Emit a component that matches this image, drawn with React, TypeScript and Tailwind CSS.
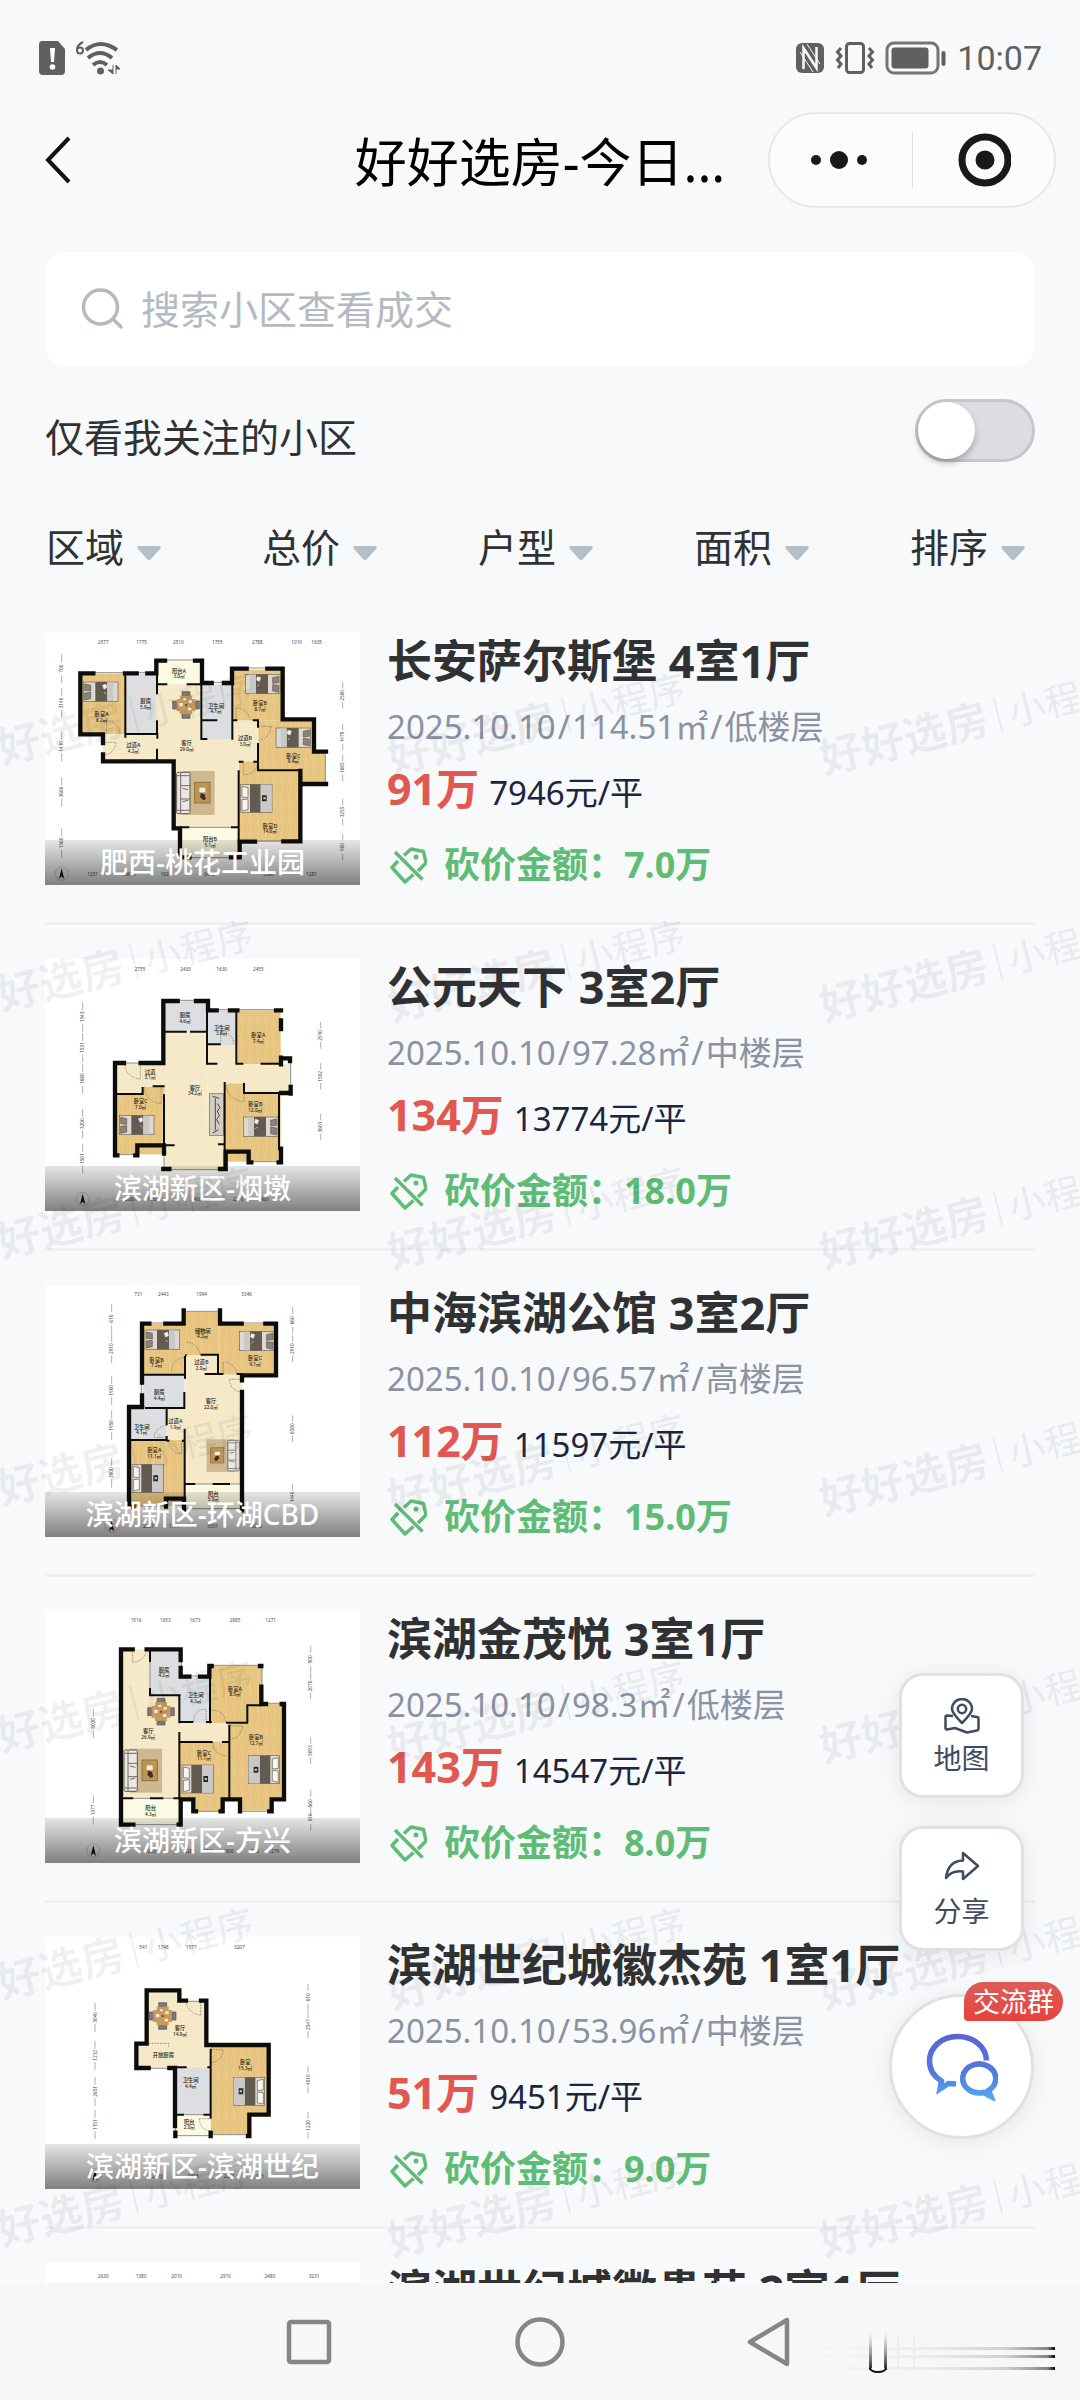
import React from "react";

type Fill = "wood" | "tile" | "grey" | "cream";
type Plan = {
  top: number;
  rooms: [number, number, number, number, Fill][];
  thick: string;
  thin: string;
  windows: string;
  doors: string;
  beds: [number, number, number][];
  sofas: [number, number, number][];
  tables: [number, number][];
  labels: [number, number, string, string][];
  dimsTop: [number, string][];
  dimsLeft: [number, string][];
  dimsRight: [number, string][];
  dimsBottom: [number, string][];
  box: [number, number, number, number];
};

const FILLS: Record<Fill, string> = {
  wood: "url(#wood)",
  tile: "url(#tile)",
  grey: "url(#grey)",
  cream: "#fbfae2",
};

const plans: Plan[] = [
  {
    top: 38,
    rooms: [
      [150, 160, 136, 182, "wood"],
      [286, 160, 95, 182, "grey"],
      [380, 122, 137, 70, "cream"],
      [380, 192, 134, 232, "tile"],
      [218, 342, 165, 80, "tile"],
      [435, 350, 190, 272, "tile"],
      [607, 300, 78, 125, "tile"],
      [514, 192, 93, 164, "grey"],
      [607, 148, 150, 152, "wood"],
      [685, 300, 165, 150, "wood"],
      [808, 395, 78, 95, "wood"],
      [627, 424, 183, 240, "wood"],
      [450, 622, 177, 90, "cream"],
    ],
    thick:
      "M190 159H151V342H219V368M219 402V423H431V624H450V711H478M603 711H629V664H675M760 663H811V452M285 159H320M352 159H379V121H405M495 121H516V188H545M582 188H606V145H650M712 145H758V297H852V394H888M812 491H888",
    thin: "M286 160V352M286 341H382V355M381 160V222M381 300V342M381 385V422M381 192H412M470 192H512M514 192V356H532M514 300H562M607 188V358M607 300H622M668 300H684V322M684 368V450H810M626 424H640M670 424H684M626 450V664M450 621H478M603 621H629",
    windows: "M190 157H285M320 157H352M405 119H495M545 186H582M650 143H712M886 402V490M675 662H760M478 712H603M478 621H603",
    doors: "M230 340V300Q265 305 270 340M218 366H258Q255 400 220 404M618 300V262Q655 265 660 300M684 318H724Q720 352 688 360M640 424V464Q678 460 684 428",
    beds: [[160, 185, 0], [646, 162, 180], [738, 323, 180], [632, 492, 1]],
    sofas: [[440, 452, 0]],
    tables: [[468, 254]],
    labels: [
      [215, 288, "卧室A", "8.2㎡"],
      [347, 248, "厨房", "5.9㎡"],
      [447, 157, "阳台A", "3.0㎡"],
      [558, 262, "卫生间", "4.1㎡"],
      [690, 255, "卧室B", "8.7㎡"],
      [310, 381, "过道A", "4.2㎡"],
      [470, 375, "客厅", "29.0㎡"],
      [645, 359, "过道B", "3.0㎡"],
      [790, 412, "卧室C", "9.4㎡"],
      [720, 622, "卧室D", "14.6㎡"],
      [540, 663, "阳台B", "5.1㎡"],
    ],
    dimsTop: [[220, "2577"], [335, "1775"], [445, "2510"], [562, "1755"], [682, "2788"], [800, "1010"], [860, "1635"]],
    dimsLeft: [[145, "700"], [248, "3140"], [378, "1410"], [515, "3660"], [668, "1360"]],
    dimsRight: [[225, "2580"], [350, "1478"], [442, "1685"], [575, "3255"], [680, "900"]],
    dimsBottom: [[188, "1251"], [300, "3610"], [408, "1628"], [538, "3410"], [715, "3390"], [845, "1281"]],
    box: [95, 67, 938, 762],
  },
  {
    top: 56,
    rooms: [
      [400, 182, 134, 92, "grey"],
      [534, 210, 86, 104, "grey"],
      [622, 210, 130, 162, "wood"],
      [404, 274, 128, 340, "tile"],
      [532, 314, 90, 250, "tile"],
      [580, 372, 200, 88, "tile"],
      [255, 368, 150, 94, "tile"],
      [255, 462, 148, 180, "wood"],
      [335, 440, 68, 30, "wood"],
      [586, 458, 166, 206, "wood"],
      [586, 430, 56, 30, "wood"],
      [402, 560, 182, 128, "tile"],
    ],
    thick:
      "M443 182H400V368H332M282 368H255V645H262M316 645H322V615H402V640M400 686H418M570 686H587V634H656V666H664M746 666H753V625M753 458H782M782 440V460M780 362V354H753M753 352V372M753 266V240M498 182H534V210H560M600 210H622M738 210H753",
    thin: "M404 274H470M480 274H532M531 182V370H562M534 312H572M619 212V370H640M692 370H753V348M255 461H338V440M368 438H404M402 462V615H434M564 612H584M584 425V686M642 428V458H753M747 458V630",
    windows: "M443 180H498M560 208H600M622 208H738M755 240V266M782 362V440M753 625V660M664 664H746M262 643H316M418 688H570M282 368H332M402 640V684",
    doors: "M331 368V416Q288 412 284 370M343 440Q346 484 394 490V440M572 312V272Q608 278 612 310M588 434Q592 478 642 484V434",
    beds: [[268, 525, 0], [640, 530, 180]],
    sofas: [[538, 460, 2]],
    tables: [],
    labels: [
      [465, 230, "厨房", "4.6㎡"],
      [575, 268, "卫生间", "3.8㎡"],
      [685, 290, "卧室A", "7.4㎡"],
      [360, 400, "过道", "3.1㎡"],
      [495, 448, "客厅", "34.2㎡"],
      [332, 488, "卧室C", "7.0㎡"],
      [676, 498, "卧室B", "12.0㎡"],
    ],
    dimsTop: [[330, "2755"], [467, "2430"], [575, "1630"], [685, "2455"]],
    dimsLeft: [[230, "1343"], [322, "1531"], [415, "1680"], [550, "3200"], [655, "1501"]],
    dimsRight: [[285, "2910"], [408, "1592"], [560, "3601"]],
    dimsBottom: [[300, "2680"], [368, "1150"], [498, "3400"], [625, "2210"], [700, "1960"]],
    box: [158, 87, 872, 778],
  },
  {
    top: 59,
    rooms: [
      [336, 176, 128, 152, "wood"],
      [462, 140, 106, 130, "wood"],
      [568, 176, 170, 152, "wood"],
      [466, 270, 98, 60, "tile"],
      [466, 328, 170, 330, "tile"],
      [338, 328, 126, 98, "grey"],
      [410, 426, 60, 100, "tile"],
      [298, 426, 112, 98, "grey"],
      [298, 524, 166, 198, "wood"],
      [466, 656, 170, 80, "cream"],
    ],
    thick:
      "M358 175H336V352M336 390V425H297V724H310M408 724V700H462V735M636 735V380M636 345V330H738V175H706M635 175H570V135M461 135V175H406",
    thin: "M340 328H462M465 272V340M463 380V428H345M465 270H470M512 268H564V328M524 326H580M620 326H638M410 428V480M410 512V524H300M410 526H418M456 526H464M464 490V700M466 656H496M548 656H600M630 656H638",
    windows: "M358 173H406M461 138H570M635 173H706M334 352V390M310 722H408M466 730H636M496 656H548M600 656H630M300 424H345",
    doors: "M470 230Q505 235 510 268M424 318Q428 280 464 276M580 326V290Q615 292 620 326M636 342H598Q602 378 634 380M410 480Q376 485 372 516H410M416 526Q420 562 455 566V526",
    beds: [[345, 194, 0], [628, 198, 180], [306, 597, 1]],
    sofas: [[532, 522, 3]],
    tables: [],
    labels: [
      [380, 289, "卧室B", "7.2㎡"],
      [518, 202, "储物间", "4.2㎡"],
      [675, 284, "卧室C", "9.1㎡"],
      [514, 296, "过道B", "2.0㎡"],
      [388, 386, "厨房", "4.4㎡"],
      [543, 413, "客厅", "22.0㎡"],
      [436, 473, "过道A", "1.9㎡"],
      [335, 490, "卫生间", "4.1㎡"],
      [373, 560, "卧室A", "11.1㎡"],
      [550, 691, "阳台", "5.0㎡"],
    ],
    dimsTop: [[325, "731"], [400, "2443"], [515, "1994"], [650, "3346"]],
    dimsLeft: [[160, "610"], [250, "2910"], [375, "1900"], [480, "1950"], [622, "3800"]],
    dimsRight: [[165, "660"], [250, "2910"], [490, "6580"], [695, "1440"]],
    dimsBottom: [[355, "2537"], [432, "1117"], [548, "3331"], [680, "2610"]],
    box: [245, 87, 788, 784],
  },
  {
    top: 63,
    rooms: [
      [272, 178, 88, 448, "tile"],
      [358, 318, 92, 306, "tile"],
      [360, 180, 92, 136, "grey"],
      [450, 262, 90, 138, "grey"],
      [540, 228, 156, 172, "wood"],
      [654, 342, 108, 290, "wood"],
      [598, 400, 60, 232, "wood"],
      [448, 400, 150, 58, "tile"],
      [450, 456, 148, 172, "wood"],
      [496, 625, 80, 40, "wood"],
      [628, 620, 92, 42, "wood"],
      [276, 628, 174, 76, "cream"],
    ],
    thick:
      "M308 178H273V704H310M446 704H452V628H490V664H498M572 664H578V628H630V664H630M718 664H725V628H762V342H755M708 342H694V290M694 228H690M545 228H538V260H510M478 260H452V234M452 210V178H350",
    thin: "M360 182V216M360 294V316H452M448 316V400M448 396H490M528 396H545M540 240V400M588 398H598M652 400V346H694M448 426V456M450 456H548M576 456H598V404M598 450V628M448 456V628M274 625H310M360 625H400M430 625H452M598 398H654",
    windows: "M545 226H690M696 232V290M708 340H755M478 258H510M454 210V234M498 664H572M632 664H718M310 704H446M310 625H360M400 625H430M360 216V294",
    doors: "M308 178V218Q345 212 350 180M490 396Q494 356 528 358V396M545 360Q585 362 588 398M600 408H638Q632 446 600 448M548 456Q550 495 590 497",
    beds: [[456, 525, 1], [655, 497, 181]],
    sofas: [[282, 476, 0]],
    tables: [[393, 365]],
    labels: [
      [402, 245, "厨房", "4.2㎡"],
      [497, 322, "卫生间", "4.3㎡"],
      [615, 302, "卧室A", "8.5㎡"],
      [355, 429, "客厅", "26.9㎡"],
      [678, 447, "卧室B", "12.7㎡"],
      [522, 494, "卧室C", "11.1㎡"],
      [362, 660, "阳台", "4.3㎡"],
    ],
    dimsTop: [[318, "1516"], [406, "1653"], [495, "1673"], [615, "2985"], [722, "1271"]],
    dimsLeft: [[400, "8020"], [660, "1377"]],
    dimsRight: [[208, "900"], [288, "2070"], [482, "5093"], [640, "560"], [682, "810"]],
    dimsBottom: [[362, "3290"], [475, "828"], [535, "1500"], [595, "1900"], [675, "590"], [732, "1276"]],
    box: [190, 90, 842, 784],
  },
  {
    top: 67,
    rooms: [
      [350, 228, 100, 170, "tile"],
      [440, 258, 90, 200, "tile"],
      [320, 390, 222, 70, "tile"],
      [440, 458, 100, 142, "grey"],
      [542, 395, 170, 208, "wood"],
      [542, 590, 114, 70, "wood"],
      [438, 600, 103, 60, "cream"],
    ],
    thick:
      "M356 460H319V387H350V227H448V258H468M513 258H529V391H716V600H658V664H654M542 655V664M436 664V654M435 634V460H418",
    thin: "M350 460H357M414 458H470M532 458H542V402M542 446V612M542 648V664M440 600H462M520 600H542",
    windows: "M357 461H414M440 663H540M545 660H654M462 600H520M468 260H513M436 634V654",
    doors: "M512 262V302Q475 296 468 262M542 405H580Q575 440 545 444M508 612H542M508 612Q510 645 540 648M358 386H416V396",
    beds: [[610, 488, 181]],
    sofas: [],
    tables: [[398, 304]],
    labels: [
      [450, 346, "客厅", "14.9㎡"],
      [400, 428, "开放厨房", ""],
      [482, 502, "卫生间", "4.4㎡"],
      [646, 448, "卧室", "15.3㎡"],
      [478, 627, "阳台", "2.0㎡"],
    ],
    dimsTop: [[340, "541"], [400, "1748"], [484, "1577"], [628, "3207"]],
    dimsLeft: [[308, "3040"], [422, "1212"], [530, "2651"], [630, "1151"]],
    dimsRight: [[248, "610"], [330, "2547"], [495, "4010"], [632, "1220"]],
    dimsBottom: [[382, "2573"], [490, "1815"], [598, "2301"], [685, "1115"]],
    box: [195, 98, 834, 784],
  },
  {
    top: 60,
    rooms: [],
    thick: "",
    thin: "",
    windows: "",
    doors: "",
    beds: [],
    sofas: [],
    tables: [],
    labels: [],
    dimsTop: [[220, "2630"], [333, "1380"], [440, "2010"], [587, "2910"], [720, "2480"], [852, "3231"]],
    dimsLeft: [],
    dimsRight: [],
    dimsBottom: [],
    box: [130, 100, 938, 780],
  },
];

/** Bed drawn 105 units wide; kinds 1 and 181 are the larger double beds. */
function Bed({ x, y, kind }: { x: number; y: number; kind: number }) {
  const big = kind % 2 === 1;
  const w = big ? 94 : 104;
  const h = big ? 84 : 58;
  const flip = kind >= 180;
  return (
    <g transform={flip ? `translate(${x + w} ${y}) scale(-1 1)` : `translate(${x} ${y})`}>
      <rect width={w} height={h} fill="#dcd8d2" stroke="#6d6257" strokeWidth="2" />
      <path d={`M4 6L22 10V${h / 2 - 2}L4 ${h / 2 - 4}ZM4 ${h / 2 + 4}L22 ${h / 2 + 2}V${h - 8}L4 ${h - 4}Z`} fill={big ? "#f7f6f2" : "#8d8378"} stroke="#5c554c" strokeWidth="2" />
      <rect x={big ? 28 : 36} width={big ? 32 : 36} height={h} fill="#635a50" />
      <rect x={big ? 60 : 72} y="1" width={big ? 33 : 18} height={h - 2} fill="#cbc9c8" />
      {big ? (
        <path d={`M64 ${h / 2 - 9}h14v18h-14zM68 ${h / 2 - 3}h7v6h-7z`} fill="#2a2725" fillRule="evenodd" />
      ) : (
        <path d="M58 10l10-3 2 10-8 4zM62 30l6 6" fill="#f1efec" stroke="#f1efec" strokeWidth="2" />
      )}
    </g>
  );
}

function Sofa({ x, y, kind }: { x: number; y: number; kind: number }) {
  if (kind === 2) {
    return (
      <g transform={`translate(${x} ${y})`}>
        <rect width="42" height="125" fill="#d3cdc3" stroke="#6d675e" strokeWidth="2" />
        <path d="M10 8L30 14M10 118L28 108M18 14V110M24 30l8 12-8 10 6 14-8 12 8 14" fill="none" stroke="#4d4944" strokeWidth="3" />
      </g>
    );
  }
  const s = kind === 3 ? `translate(${x + 96} ${y}) scale(-.86 .74)` : `translate(${x} ${y})`;
  return (
    <g transform={s}>
      <rect x="18" width="96" height="132" fill="#cdb892" />
      <rect x="0" y="4" width="40" height="124" rx="4" fill="#ece7e2" stroke="#5e5750" strokeWidth="3" />
      <path d="M12 6V126M12 44H40M12 84H40M2 14H38M2 118H38M18 52l16 4M18 92l16-4" fill="none" stroke="#716960" strokeWidth="3" />
      <rect x="54" y="34" width="46" height="62" fill="#bd9454" stroke="#92703b" strokeWidth="3" />
      <path d="M68 50h18v14H68z" fill="#f1eee8" />
      <path d="M72 66l12 4 4 14-8 4-10-10z" fill="#373028" />
    </g>
  );
}

function DiningTable({ x, y }: { x: number; y: number }) {
  return (
    <g transform={`translate(${x} ${y})`}>
      <path d="M-12 -40h24v12h-24zM-12 28h24v12h-24zM-40 -12h12v24h-12zM28 -12h12v24h-12z" fill="#7d7a77" stroke="#55524f" strokeWidth="2" />
      <path d="M-18 -28H18V-18H28V18H18V28H-18V18H-28V-18H-18Z" fill="#c79a5c" />
      <path d="M-20 -6h10v10h-10zM8 -14h10v8H8zM6 8h10v8H6zM-8 -20h8v6h-8z" fill="#f2ede4" />
      <circle r="3" fill="#5c3a1f" />
    </g>
  );
}

function FloorPlan({ plan }: { plan: Plan }) {
  const [left, top, right, bottom] = plan.box;
  return (
    <svg className="block h-full w-full bg-white" viewBox={`45 ${plan.top} 945 756`} aria-hidden="true">
      {plan.rooms.map(([x, y, w, h, fill], i) => (
        <rect key={i} x={x} y={y} width={w} height={h} fill={FILLS[fill]} />
      ))}
      <path d={plan.doors} fill="none" stroke="#77705f" strokeWidth="2" strokeDasharray="5 3" />
      {plan.tables.map(([x, y], i) => (
        <DiningTable key={i} x={x} y={y} />
      ))}
      {plan.sofas.map(([x, y, k], i) => (
        <Sofa key={i} x={x} y={y} kind={k} />
      ))}
      {plan.beds.map(([x, y, k], i) => (
        <Bed key={i} x={x} y={y} kind={k} />
      ))}
      <path d={plan.windows} fill="none" stroke="#8b8f90" strokeWidth="3" />
      <path d={plan.thin} fill="none" stroke="#0c0c0a" strokeWidth="6" />
      <path d={plan.thick} fill="none" stroke="#0c0c0a" strokeWidth="13" strokeLinecap="square" />
      <g fontSize="16" textAnchor="middle" fill="#1d1a14" fontWeight="500">
        {plan.labels.map(([x, y, name, area], i) => (
          <text key={i} x={x} y={y}>
            {name}
            <tspan x={x} dy="17" fontSize="14">{area}</tspan>
          </text>
        ))}
      </g>
      <g fontSize="14" textAnchor="middle" fill="#4a4a4a">
        {plan.dimsTop.map(([x, t], i) => (
          <text key={i} x={x} y={top + 5}>{t}</text>
        ))}
        {plan.dimsBottom.map(([x, t], i) => (
          <text key={i} x={x} y={bottom + 5}>{t}</text>
        ))}
        {plan.dimsLeft.map(([y, t], i) => (
          <g key={i}>
            <path d={`M${left} ${y - 44}V${y - 20}M${left} ${y + 20}V${y + 44}`} stroke="#8a8a8a" strokeWidth="2" />
            <text transform={`translate(${left + 5} ${y}) rotate(-90)`}>{t}</text>
          </g>
        ))}
        {plan.dimsRight.map(([y, t], i) => (
          <g key={i}>
            <path d={`M${right} ${y - 40}V${y - 20}M${right} ${y + 20}V${y + 40}`} stroke="#8a8a8a" strokeWidth="2" />
            <text transform={`translate(${right + 5} ${y}) rotate(-90)`}>{t}</text>
          </g>
        ))}
      </g>
      <circle cx={left} cy={bottom - 2} r="20" fill="none" stroke="#8a8a8a" strokeWidth="1" />
      <path d={`M${left} ${bottom - 18}l8 32-8-8-8 8z`} fill="#111" />
    </svg>
  );
}

const listings = [
  { name: "长安萨尔斯堡", rooms: "4室1厅", area: "114.51", floor: "低楼层", price: "91", unit: "7946", cut: "7.0", region: "肥西-桃花工业园" },
  { name: "公元天下", rooms: "3室2厅", area: "97.28", floor: "中楼层", price: "134", unit: "13774", cut: "18.0", region: "滨湖新区-烟墩" },
  { name: "中海滨湖公馆", rooms: "3室2厅", area: "96.57", floor: "高楼层", price: "112", unit: "11597", cut: "15.0", region: "滨湖新区-环湖CBD" },
  { name: "滨湖金茂悦", rooms: "3室1厅", area: "98.3", floor: "低楼层", price: "143", unit: "14547", cut: "8.0", region: "滨湖新区-方兴" },
  { name: "滨湖世纪城徽杰苑", rooms: "1室1厅", area: "53.96", floor: "中楼层", price: "51", unit: "9451", cut: "9.0", region: "滨湖新区-滨湖世纪" },
  { name: "滨湖世纪城徽贵苑", rooms: "2室1厅", area: "88.6", floor: "中楼层", price: "96", unit: "10835", cut: "6.0", region: "滨湖新区-滨湖世纪" },
];

function TagIcon() {
  return (
    <svg className="h-10 w-10 shrink-0" viewBox="0 0 40 40" fill="none" stroke="#5fbc75" strokeWidth="3.500" strokeLinejoin="round" aria-hidden="true">
      <path d="M17 10.500L24 4L36.500 6.500L39 18L31 26" />
      <path d="M11 16L5 22.500L18 37L26.500 29.500" />
      <path d="M8 7L35.500 34.500" />
      <circle cx="29" cy="12" r="2.500" fill="#5fbc75" stroke="none" />
    </svg>
  );
}

function StatusBar() {
  return (
    <div className="flex h-28 items-center justify-between pt-1 pr-[38px] pl-[38px] text-[#606060]">
      <div className="flex items-center gap-2">
        <svg className="h-9 w-7" viewBox="0 0 28 36" aria-hidden="true">
          <path d="M4 1H20L27 9V31Q27 35 23 35H5Q1 35 1 31V5Q1 1 4 1Z" fill="#606060" />
          <path d="M12 8h5l-1 14h-3z" fill="#fff" />
          <circle cx="14.500" cy="27" r="2.800" fill="#fff" />
        </svg>
        <svg className="h-9 w-12" viewBox="0 0 48 36" fill="none" stroke="#606060" aria-hidden="true">
          <path d="M9 2Q3 5 3 10" strokeWidth="2" />
          <circle cx="6" cy="10.500" r="3" strokeWidth="2" />
          <path d="M12 10Q26 -2 43 10" strokeWidth="4" />
          <path d="M14 18Q26 8 38 18" strokeWidth="4" />
          <path d="M19 25Q26 19 33 25" strokeWidth="4" />
          <circle cx="26.500" cy="31" r="3.500" fill="#606060" stroke="none" />
          <path d="M39 25v9l-5-4h5M42 34v-9l4 4h-4" fill="#606060" strokeWidth="1" />
        </svg>
      </div>
      <div className="flex items-center gap-[10px]">
        <svg className="h-8 w-[30px]" viewBox="0 0 30 32" aria-hidden="true">
          <rect x="1" y="1" width="28" height="30" rx="6" fill="#606060" />
          <path d="M8.500 27V6L21.500 26V5" fill="none" stroke="#f7f9fb" strokeWidth="2.500" />
          <path d="M12 2L25 22M5 10L18 30" stroke="#f7f9fb" strokeWidth="1" />
        </svg>
        <svg className="h-9 w-10" viewBox="0 0 40 36" fill="none" stroke="#606060" strokeWidth="3" aria-hidden="true">
          <rect x="11.500" y="3.500" width="17" height="29" rx="3" />
          <path d="M6 8L2.500 12L6 16L2.500 20L6 24L3 28" />
          <path d="M34 8L37.500 12L34 16L37.500 20L34 24L37 28" />
        </svg>
        <svg className="h-9 w-[62px]" viewBox="0 0 62 36" aria-hidden="true">
          <rect x="2" y="3" width="51" height="30" rx="7" fill="none" stroke="#757575" strokeWidth="3" />
          <rect x="6.500" y="7.500" width="37" height="21" rx="3" fill="#606060" />
          <rect x="56.500" y="11" width="4" height="15" rx="2" fill="#606060" />
        </svg>
        <span className="font-['Roboto',sans-serif] text-[34px] leading-10">10:07</span>
      </div>
    </div>
  );
}

function Header() {
  return (
    <header className="relative flex h-24 items-center justify-between pr-6 pl-[42px]">
      <button type="button" aria-label="返回" className="flex h-12 w-8 items-center">
        <svg className="h-12 w-8" viewBox="0 0 32 48" fill="none" stroke="#111" strokeWidth="4" aria-hidden="true">
          <path d="M27 2L6 24L27 46" />
        </svg>
      </button>
      <h1 className="absolute left-1/2 -translate-x-1/2 pt-1 text-[52px] leading-[60px] whitespace-nowrap text-black">好好选房-今日...</h1>
      <div className="relative flex h-24 w-72 items-center rounded-full border-2 border-[#e7e8ea] bg-[#fcfcfd]">
        <button type="button" aria-label="更多" className="flex flex-1 justify-center">
          <svg className="h-5 w-[60px]" viewBox="0 0 60 20" fill="#191919" aria-hidden="true">
            <circle cx="5" cy="10" r="5" />
            <circle cx="28" cy="10" r="9" />
            <circle cx="51" cy="10" r="5" />
          </svg>
        </button>
        <span className="h-14 w-px bg-[#dfe0e2]" />
        <button type="button" aria-label="关闭" className="flex flex-1 justify-center">
          <svg className="h-14 w-14" viewBox="0 0 56 56" aria-hidden="true">
            <circle cx="30" cy="28" r="23" fill="none" stroke="#191919" strokeWidth="7" />
            <circle cx="30" cy="28" r="9.500" fill="#191919" />
          </svg>
        </button>
      </div>
    </header>
  );
}

function Filters() {
  return (
    <div className="mt-[57px] mb-6 grid h-14 shrink-0 grid-cols-5 justify-items-center">
      {["区域", "总价", "户型", "面积", "排序"].map((name) => (
        <div key={name} className="relative flex w-[124px] items-center">
          <select aria-label={name} className="w-full cursor-pointer appearance-none bg-transparent text-[39px] leading-14 text-[#303133] outline-none">
            <option>{name}</option>
          </select>
          <svg className="pointer-events-none absolute top-[26px] right-2 h-4 w-[26px]" viewBox="0 0 26 16" fill="#b3bec7" aria-hidden="true">
            <path d="M3 1H23Q26 1 24 4L15 14Q13 16 11 14L2 4Q0 1 3 1Z" />
          </svg>
        </div>
      ))}
    </div>
  );
}

function Listing({ item, plan }: { item: (typeof listings)[number]; plan: Plan }) {
  return (
    <li className="mx-[45px] flex items-start gap-[27px] border-b-[3px] border-[#eef0f2] pt-[34px] pb-[37px]">
      <figure className="relative h-[252px] w-[315px] shrink-0">
        <FloorPlan plan={plan} />
        <figcaption className="absolute inset-x-0 bottom-0 bg-linear-to-b from-black/10 to-black/50 text-center text-[28px] leading-[45px] font-medium text-white">
          {item.region}
        </figcaption>
      </figure>
      <div className="min-w-0 flex-1 whitespace-nowrap">
        <h2 className="h-14 text-[45px] leading-14 font-bold text-[#303133]">
          {item.name} {item.rooms}
        </h2>
        <p className="mt-4 flex h-11 items-center gap-0.5 text-[33px] leading-11 text-[#8a92a3]">
          <span>2025.10.10</span>
          <span>/</span>
          <span>{item.area}㎡</span>
          <span>/</span>
          <span>{item.floor}</span>
        </p>
        <p className="mt-3 flex h-14 items-baseline gap-2.5 leading-14">
          <strong className="text-[43px] font-bold text-[#e0584f]">{item.price}万</strong>
          <span className="text-[33px] text-[#1b2540]">{item.unit}元/平</span>
        </p>
        <p className="mt-7 flex h-10 items-center gap-[17px] text-[36px] leading-10 font-bold text-[#5fbc75]">
          <TagIcon />
          <span>砍价金额：{item.cut}万</span>
        </p>
      </div>
    </li>
  );
}

function Watermarks() {
  return (
    <div className="pointer-events-none absolute inset-0 overflow-hidden" aria-hidden="true">
      <div className="-ml-12 grid w-[200%] auto-rows-[247px] grid-cols-[repeat(auto-fill,432px)] text-slate-900/6">
        {Array.from({ length: 35 }, (_, i) => (
          <div key={i} className="flex items-center">
            <div className="flex -rotate-14 items-center gap-[10px] whitespace-nowrap">
              <span className="text-[43px] font-bold">好好选房</span>
              <span className="h-9 w-0.5 bg-slate-900/6" />
              <span className="text-[37px] font-medium">小程序</span>
            </div>
          </div>
        ))}
      </div>
    </div>
  );
}

function FloatingActions() {
  const box =
    "flex h-[125px] w-[125px] flex-col items-center gap-1 rounded-3xl border-[3px] border-[#e0e1e3] bg-white pt-[22px] text-[28px] leading-10 text-[#414a5e] shadow-[0_4px_24px_rgba(0,0,0,0.08)]";
  return (
    <div className="absolute right-[46px] bottom-[144px] flex flex-col items-center">
      <button type="button" className={box}>
        <svg className="h-9 w-9" viewBox="0 0 36 36" fill="none" stroke="#414a5e" strokeWidth="2.500" strokeLinejoin="round" aria-hidden="true">
          <path d="M18 25Q8 15 8 11A10 10 0 0 1 28 11Q28 15 18 25Z" />
          <circle cx="18" cy="11" r="4.200" />
          <path d="M9 18L3 17.500Q1.500 17.500 1.500 19V30Q1.500 31.500 3 31.500L11 30L23 34.500L33 32.500Q34.500 32 34.500 30.500V20.500Q34.500 19 33 19L27 18" />
        </svg>
        地图
      </button>
      <button type="button" className={`${box} mt-7`}>
        <svg className="h-9 w-9" viewBox="0 0 36 36" fill="none" stroke="#414a5e" strokeWidth="2.500" strokeLinejoin="round" aria-hidden="true">
          <path d="M19 2L34 15L19 28V20.500Q8 19 2 27Q4 10 19 9.500Z" />
        </svg>
        分享
      </button>
      <button type="button" className="relative mt-[43px] flex h-[145px] w-[145px] items-center justify-center rounded-full border-[3px] border-[#e0e1e3] bg-white shadow-[0_4px_24px_rgba(0,0,0,0.08)]">
        <svg className="h-[68px] w-[72px]" viewBox="0 0 72 68" fill="none" strokeWidth="5.500" aria-hidden="true">
          <defs>
            <linearGradient id="chat" gradientUnits="userSpaceOnUse" x1="0" y1="0" x2="0" y2="66">
              <stop offset="0" stopColor="#5a62d6" />
              <stop offset="0.600" stopColor="#5479dc" />
              <stop offset="1" stopColor="#4fa8f0" />
            </linearGradient>
          </defs>
          <path d="M60.500 27.500C60 13 47 3.500 31.500 3.500C15 3.500 3.500 15 3.500 28C3.500 36 8 43.500 15.500 48L14 56L22.500 50.500L30 51" stroke="url(#chat)" />
          <path d="M62.500 57.500A16.500 14.500 0 1 0 57.500 59.500L65 63.500Z" stroke="url(#chat)" />
        </svg>
        <span className="absolute -top-[15px] left-[72px] rounded-[20px] rounded-bl-sm bg-linear-to-b from-[#de5c58] to-[#e8403c] px-[9px] text-[27px] leading-[39px] whitespace-nowrap text-white">
          交流群
        </span>
      </button>
    </div>
  );
}

function SystemNav() {
  return (
    <nav className="relative flex h-[117px] shrink-0 items-center justify-center gap-[173px] bg-[#f7f7f7]">
      <button type="button" aria-label="最近任务">
        <svg className="h-[58px] w-[58px]" viewBox="0 0 58 58" fill="none" stroke="#868686" strokeWidth="4.500" aria-hidden="true">
          <rect x="9" y="9" width="40" height="40" rx="2" />
        </svg>
      </button>
      <button type="button" aria-label="主页">
        <svg className="h-[58px] w-[58px]" viewBox="0 0 58 58" fill="none" stroke="#868686" strokeWidth="4.500" aria-hidden="true">
          <circle cx="29" cy="29" r="22.500" />
        </svg>
      </button>
      <button type="button" aria-label="返回上一页">
        <svg className="h-[58px] w-[58px]" viewBox="0 0 58 58" fill="none" stroke="#868686" strokeWidth="4.500" strokeLinejoin="round" aria-hidden="true">
          <path d="M45 7V51L8 29Z" />
        </svg>
      </button>
      <svg className="absolute right-6 bottom-5 h-12 w-64" viewBox="0 0 256 48" aria-hidden="true">
        <defs>
          <linearGradient id="streak" x1="0" x2="1" y1="0" y2="0">
            <stop offset="0" stopColor="#999" stopOpacity="0" />
            <stop offset="0.500" stopColor="#999" stopOpacity="0.120" />
            <stop offset="0.800" stopColor="#888" stopOpacity="0.350" />
            <stop offset="0.970" stopColor="#666" stopOpacity="0.800" />
            <stop offset="1" stopColor="#000" />
          </linearGradient>
          <linearGradient id="post" x1="0" x2="0" y1="0" y2="1">
            <stop offset="0" stopColor="#888" stopOpacity="0" />
            <stop offset="1" stopColor="#222" />
          </linearGradient>
        </defs>
        <rect x="0" y="15" width="255" height="3" fill="url(#streak)" />
        <rect x="0" y="23" width="255" height="3" fill="url(#streak)" />
        <rect x="0" y="35" width="255" height="3" fill="url(#streak)" />
        <rect x="72" y="6" width="12" height="32" fill="#fafafa" />
        <rect x="69" y="0" width="3" height="38" fill="url(#post)" />
        <rect x="84" y="0" width="3" height="38" fill="url(#post)" />
        <path d="M70 36Q71 40 78 40Q85 40 86 36" fill="#fff" stroke="#111" strokeWidth="2" />
        <path d="M98 4V38M114 4V38" stroke="#eee" strokeWidth="2" />
      </svg>
    </nav>
  );
}

export default function App() {
  return (
    <div className="flex h-screen flex-col overflow-hidden bg-[#f7f9fb] font-['Noto_Sans','Noto_Sans_CJK_SC',sans-serif]">
      <svg className="absolute h-0 w-0" aria-hidden="true">
        <defs>
          <pattern id="wood" width="24" height="60" patternUnits="userSpaceOnUse">
            <rect width="24" height="60" fill="#e8c682" />
            <path d="M0 0V60M8 0V34M16 20V60" stroke="#debb76" strokeWidth="1.500" />
            <path d="M12 0V60" stroke="#efd196" strokeWidth="2" />
          </pattern>
          <pattern id="tile" width="16" height="16" patternUnits="userSpaceOnUse">
            <rect width="16" height="16" fill="#f6eaca" />
            <path d="M0 0H16M0 0V16" stroke="#f0e0ba" strokeWidth="1.500" />
          </pattern>
          <pattern id="grey" width="12" height="12" patternUnits="userSpaceOnUse">
            <rect width="12" height="12" fill="#dcdfe1" />
            <path d="M0 0H12M0 0V12" stroke="#d2d5d7" />
          </pattern>
        </defs>
      </svg>
      <StatusBar />
      <Header />
      <main className="relative flex min-h-0 flex-1 flex-col overflow-hidden">
        <label className="mx-[45px] mt-11 flex h-[114px] shrink-0 items-center gap-4 rounded-[20px] bg-white pr-9 pl-9">
          <svg className="h-11 w-11" viewBox="0 0 44 44" fill="none" stroke="#b5b9c1" strokeWidth="3.500" strokeLinecap="round" aria-hidden="true">
            <circle cx="19.500" cy="20" r="17" />
            <path d="M32 32L40 40" />
          </svg>
          <input
            type="search"
            aria-label="搜索小区查看成交"
            placeholder="搜索小区查看成交"
            className="min-w-0 flex-1 bg-transparent text-[39px] leading-14 text-[#303133] outline-none placeholder:text-[#b5b9c1]"
          />
        </label>
        <div className="mx-[45px] mt-[33px] flex h-[63px] shrink-0 items-center justify-between">
          <label htmlFor="followed" className="pt-3 text-[39px] leading-[47px] text-[#303133]">仅看我关注的小区</label>
          <input
            id="followed"
            type="checkbox"
            role="switch"
            className="h-[63px] w-[120px] cursor-pointer appearance-none rounded-full border-[3px] border-[#c6c7ca] bg-[#dcdde1] before:block before:h-[57px] before:w-[57px] before:rounded-full before:bg-white before:shadow-[0_4px_6px_rgba(0,0,0,0.25)] checked:bg-[#5fbc75] checked:before:ml-auto"
          />
        </div>
        <Filters />
        <section className="relative min-h-0 flex-1 overflow-hidden">
          <ul>
            {listings.map((item, i) => (
              <Listing key={item.name} item={item} plan={plans[i]} />
            ))}
          </ul>
          <Watermarks />
        </section>
        <FloatingActions />
      </main>
      <SystemNav />
    </div>
  );
}
